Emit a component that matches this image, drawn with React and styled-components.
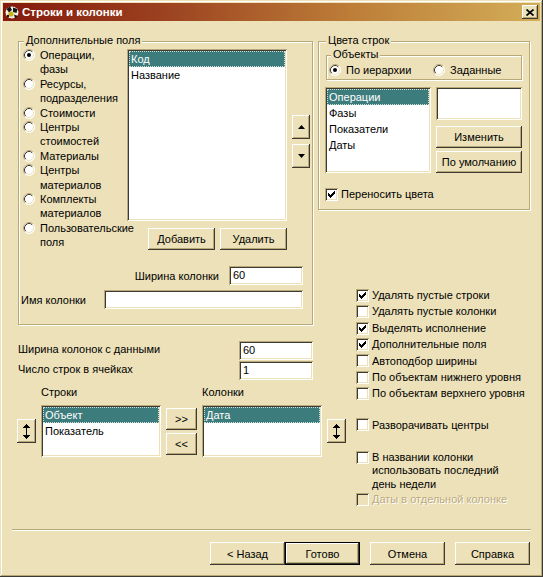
import React from "react";
import styled, { createGlobalStyle, css } from "styled-components";

const FACE = "#ece1b9";
const SHADOW = "#b9a979";
const DARK = "#3c3a32";
const SELECT = "#3d7c7c";
const DISABLED = "#bcab7d";

const GlobalStyle = createGlobalStyle`
  html, body { margin: 0; padding: 0; background: ${FACE}; }
  body { font-family: "Liberation Sans", Arial, sans-serif; font-size: 11px; color: #000; }
  *, *::before, *::after { box-sizing: border-box; }
`;

const raised = css`
  background: ${FACE};
  box-shadow: inset -1px -1px ${DARK}, inset 1px 1px #fff, inset -2px -2px ${SHADOW};
`;

const sunken = css`
  box-shadow: inset 1px 1px ${SHADOW}, inset -1px -1px #fff, inset 2px 2px ${DARK},
    inset -2px -2px ${FACE};
`;

const etched = css`
  border: 1px solid ${SHADOW};
  box-shadow: inset 1px 1px 0 #fff, 1px 1px 0 #fff;
`;

/* ---------- window frame ---------- */

const Window = styled.div`
  width: 543px;
  height: 577px;
  display: flex;
  flex-direction: column;
  padding: 3px;
  background: ${FACE};
  box-shadow: inset -1px -1px ${DARK}, inset 1px 1px ${FACE}, inset -2px -2px ${SHADOW},
    inset 2px 2px #fff;
  font-family: "Liberation Sans", Arial, sans-serif;
  font-size: 11px;
`;

const TitleBar = styled.div`
  height: 18px;
  flex: none;
  display: flex;
  align-items: center;
  gap: 2px;
  padding: 0 2px 0 1px;
  background: linear-gradient(90deg, #84190c 0%, #9c4220 30%, #bd7e38 65%, #d3ad58 100%);
  color: #fff;
  font-weight: bold;
  font-size: 11.5px;
  white-space: nowrap;
`;

const TitleText = styled.span`
  line-height: 18px;
`;

const CloseButton = styled.div`
  margin-left: auto;
  width: 16px;
  height: 14px;
  display: flex;
  align-items: center;
  justify-content: center;
  ${raised};
`;

const Body = styled.div`
  flex: 1;
  display: flex;
  flex-direction: column;
  padding: 20px 10px 9px 15px;
`;

const MainGrid = styled.div`
  display: grid;
  grid-template-columns: 300px 38px 174px;
  grid-template-rows: 248px 36px auto;
  grid-template-areas:
    "extra colors colors"
    "extra . checks"
    "bottom bottom checks";
`;

/* ---------- group boxes ---------- */

const GroupBox = styled.div`
  position: relative;
  ${etched};
  grid-area: ${(p) => p.$area || "auto"};
`;

const Legend = styled.span`
  position: absolute;
  top: -8px;
  left: ${(p) => p.$left}px;
  padding: 0 2px;
  line-height: 13px;
  background: ${FACE};
  white-space: nowrap;
`;

const ExtraGroup = styled(GroupBox)`
  margin-right: 5px;
  padding: 6px 2px 0 4px;
`;

const ExtraLayout = styled.div`
  display: grid;
  grid-template-columns: 104px 160px 5px 18px;
  grid-template-rows: 173px 22px;
  row-gap: 7px;
`;

const RadioColumn = styled.div`
  grid-column: 1;
  grid-row: 1 / span 2;
  display: flex;
  flex-direction: column;
`;

const RadioRow = styled.div`
  display: flex;
  align-items: flex-start;
  gap: 5px;
  line-height: 14.4px;
  white-space: nowrap;
`;

const RadioSvg = styled.svg`
  flex: none;
  margin-top: 1px;
`;

const ListCell = styled.div`
  grid-column: ${(p) => p.$col || "auto"};
  grid-row: ${(p) => p.$row || "auto"};
  margin-top: ${(p) => p.$mt || 0}px;
`;

const ArrowStack = styled.div`
  grid-column: 4;
  grid-row: 1;
  margin-top: 67px;
  display: flex;
  flex-direction: column;
  gap: 5px;
`;

const ButtonPair = styled.div`
  grid-column: 2;
  grid-row: 2;
  display: flex;
  justify-content: flex-end;
  gap: 5px;
`;

const WidthRow = styled.div`
  margin-top: 16px;
  padding-right: 7px;
  display: flex;
  justify-content: flex-end;
  align-items: center;
  gap: 10px;
`;

const NameRow = styled.div`
  margin: 5px 0 0 -2px;
  padding-right: 7px;
  display: grid;
  grid-template-columns: 83px 1fr;
  align-items: center;
`;

const ColorsGroup = styled(GroupBox)`
  align-self: start;
  padding: 13px 7px 8px 6px;
`;

const ObjectsBox = styled(GroupBox)`
  margin-left: 1px;
  height: 25px;
  padding: 7px 0 0 2px;
  display: grid;
  grid-template-columns: 104px auto;
`;

const ColorsRow = styled.div`
  margin-top: 7px;
  display: flex;
  gap: 5px;
`;

const ColorSide = styled.div`
  width: 86px;
  display: flex;
  flex-direction: column;
`;

const Swatch = styled.div`
  height: 33px;
  margin-bottom: 6px;
  background: #fff;
  ${sunken};
`;

/* ---------- controls ---------- */

const Button = styled.div`
  width: ${(p) => p.$w}px;
  height: ${(p) => p.$h || 22}px;
  margin-top: ${(p) => p.$mt || 0}px;
  display: flex;
  align-items: center;
  justify-content: center;
  flex: none;
  white-space: nowrap;
  ${raised};
  ${(p) =>
    p.$default &&
    css`
      border: 1px solid #000;
    `}
`;

const ListBox = styled.div`
  width: ${(p) => p.$w}px;
  height: ${(p) => p.$h}px;
  padding: 2px;
  background: #fff;
  overflow: hidden;
  ${sunken};
`;

const ListItem = styled.div`
  height: 16px;
  line-height: 16px;
  padding-left: 2px;
  white-space: nowrap;
  ${(p) =>
    p.$selected &&
    css`
      background: ${SELECT};
      color: #fff;
      outline: 1px dotted #cfe0d8;
      outline-offset: -1px;
    `}
`;

const TextField = styled.div`
  width: ${(p) => (p.$w ? `${p.$w}px` : "auto")};
  height: 19px;
  padding: 0 4px;
  line-height: 19px;
  background: #fff;
  ${sunken};
`;

const Label = styled.span`
  white-space: nowrap;
  line-height: 14px;
`;

const CheckRow = styled.div`
  display: flex;
  align-items: flex-start;
  gap: 3px;
  margin-top: ${(p) => p.$mt || 0}px;
  line-height: ${(p) => p.$lh}px;
  white-space: nowrap;
  color: ${(p) => (p.$disabled ? DISABLED : "#000")};
  text-shadow: ${(p) => (p.$disabled ? "1px 1px 0 #fff" : "none")};
`;

const CheckFrame = styled.span`
  flex: none;
  width: 13px;
  height: 13px;
  margin-top: ${(p) => p.$mt}px;
  display: flex;
  align-items: center;
  justify-content: center;
  background: ${(p) => (p.$disabled ? FACE : "#fff")};
  ${sunken};
`;

const CheckList = styled.div`
  grid-area: checks;
  margin-top: -2px;
  display: flex;
  flex-direction: column;
`;

const BottomArea = styled.div`
  grid-area: bottom;
  padding-top: 16px;
  display: flex;
  flex-direction: column;
`;

const FieldGrid = styled.div`
  display: grid;
  grid-template-columns: 221px 74px;
  row-gap: 1px;
  align-items: start;
`;

const FieldLabel = styled(Label)`
  padding-top: 1px;
`;

const TransferGrid = styled.div`
  margin: 5px 0 0 -1px;
  display: grid;
  grid-template-columns: 19px 120px 31px 120px 19px;
  grid-template-rows: 14px 52px;
  column-gap: 5px;
  row-gap: 6px;
`;

const GridLabel = styled(Label)`
  grid-column: ${(p) => p.$col};
  grid-row: 1;
`;

const CenterCell = styled.div`
  grid-column: ${(p) => p.$col};
  grid-row: 2;
  align-self: center;
  display: flex;
  flex-direction: column;
  gap: 3px;
`;

const Footer = styled.div`
  margin-top: auto;
  display: flex;
  flex-direction: column;
`;

const Separator = styled.div`
  height: 2px;
  margin: 0 -1px 11px -6px;
  border-top: 1px solid ${SHADOW};
  border-bottom: 1px solid #fff;
`;

const FooterButtons = styled.div`
  display: flex;
  justify-content: flex-end;
  gap: 10px;
`;

const Joined = styled.div`
  display: flex;
`;

/* ---------- drawings ---------- */

const AppIcon = () => (
  <svg width="16" height="16" viewBox="0 0 16 16">
    <ellipse cx="8" cy="8.5" rx="6.5" ry="6" fill="#f4f1e2" />
    <path d="M2.5 5 L6 2.5 L8 6 L5 8.5 Z" fill="#161616" />
    <path d="M9 3.5 L13.5 5 L12.5 9 L9 8 Z" fill="#161616" />
    <circle cx="7" cy="10" r="2.6" fill="#c9b21e" />
    <path d="M10 10.5 L14 12 L11 14.5 Z" fill="#161616" />
    <circle cx="4" cy="12" r="1.2" fill="#161616" />
  </svg>
);

const CloseGlyph = () => (
  <svg width="8" height="7" viewBox="0 0 8 7">
    <path d="M0.5 0.5 L7.5 6.5 M7.5 0.5 L0.5 6.5" stroke="#000" strokeWidth="1.7" />
  </svg>
);

const RadioMark = ({ checked }) => (
  <RadioSvg width="12" height="12" viewBox="0 0 12 12">
    <circle cx="6" cy="6" r="5.5" fill="#fff" />
    <path d="M2.11 9.89 A5.5 5.5 0 0 1 9.89 2.11" stroke={SHADOW} fill="none" />
    <path d="M9.89 2.11 A5.5 5.5 0 0 1 2.11 9.89" stroke="#fff" fill="none" />
    <path d="M2.82 9.18 A4.5 4.5 0 0 1 9.18 2.82" stroke={DARK} fill="none" />
    <path d="M9.18 2.82 A4.5 4.5 0 0 1 2.82 9.18" stroke={FACE} fill="none" />
    {checked && <circle cx="6" cy="6" r="2" fill="#000" />}
  </RadioSvg>
);

const CheckMark = () => (
  <svg width="7" height="7" viewBox="0 0 7 7" shapeRendering="crispEdges">
    {[2, 3, 4, 3, 2, 1, 0].map((y, x) => (
      <rect key={x} x={x} y={y} width="1" height="3" fill="#000" />
    ))}
  </svg>
);

const Triangle = ({ down }) => (
  <svg width="7" height="4" viewBox="0 0 7 4">
    <polygon points={down ? "0,0 7,0 3.5,4" : "3.5,0 7,4 0,4"} fill="#000" />
  </svg>
);

const UpDownGlyph = () => (
  <svg width="7" height="15" viewBox="0 0 7 15" shapeRendering="crispEdges">
    <polygon points="3.5,0 7,4 0,4" fill="#000" />
    <rect x="3" y="4" width="1" height="7" fill="#000" />
    <polygon points="0,11 7,11 3.5,15" fill="#000" />
  </svg>
);

/* ---------- small composites ---------- */

const Radio = ({ checked, lines }) => (
  <RadioRow>
    <RadioMark checked={checked} />
    <span>
      {lines.map((l, i) => (
        <div key={i}>{l}</div>
      ))}
    </span>
  </RadioRow>
);

const Check = ({ checked, disabled, lines, lh = 16.4, mt }) => (
  <CheckRow $lh={lh} $mt={mt} $disabled={disabled}>
    <CheckFrame $mt={(lh - 13) / 2} $disabled={disabled}>
      {checked && <CheckMark />}
    </CheckFrame>
    <span>
      {lines.map((l, i) => (
        <div key={i}>{l}</div>
      ))}
    </span>
  </CheckRow>
);

const List = ({ w, h, items, selected = 0 }) => (
  <ListBox $w={w} $h={h}>
    {items.map((it, i) => (
      <ListItem key={it} $selected={i === selected}>
        {it}
      </ListItem>
    ))}
  </ListBox>
);

const extraFields = [
  ["Операции,", "фазы"],
  ["Ресурсы,", "подразделения"],
  ["Стоимости"],
  ["Центры", "стоимостей"],
  ["Материалы"],
  ["Центры", "материалов"],
  ["Комплекты", "материалов"],
  ["Пользовательские", "поля"],
];

const options = [
  ["Удалять пустые строки", true],
  ["Удалять пустые колонки", false],
  ["Выделять исполнение", true],
  ["Дополнительные поля", true],
  ["Автоподбор ширины", false],
  ["По объектам нижнего уровня", false],
  ["По объектам верхнего уровня", false],
];

export default function App() {
  return (
    <>
      <GlobalStyle />
      <Window>
        <TitleBar>
          <AppIcon />
          <TitleText>Строки и колонки</TitleText>
          <CloseButton>
            <CloseGlyph />
          </CloseButton>
        </TitleBar>

        <Body>
          <MainGrid>
            <ExtraGroup $area="extra">
              <Legend $left={5}>Дополнительные поля</Legend>
              <ExtraLayout>
                <RadioColumn>
                  {extraFields.map((lines, i) => (
                    <Radio key={i} lines={lines} checked={i === 0} />
                  ))}
                </RadioColumn>
                <ListCell $col={2} $row={1} $mt={1}>
                  <List w={160} h={172} items={["Код", "Название"]} />
                </ListCell>
                <ArrowStack>
                  <Button $w={18} $h={24}>
                    <Triangle />
                  </Button>
                  <Button $w={18} $h={24}>
                    <Triangle down />
                  </Button>
                </ArrowStack>
                <ButtonPair>
                  <Button $w={67}>Добавить</Button>
                  <Button $w={67}>Удалить</Button>
                </ButtonPair>
              </ExtraLayout>
              <WidthRow>
                <Label>Ширина колонки</Label>
                <TextField $w={74}>60</TextField>
              </WidthRow>
              <NameRow>
                <Label>Имя колонки</Label>
                <TextField />
              </NameRow>
            </ExtraGroup>

            <ColorsGroup $area="colors">
              <Legend $left={7}>Цвета строк</Legend>
              <ObjectsBox>
                <Legend $left={4}>Объекты</Legend>
                <Radio checked lines={["По иерархии"]} />
                <Radio lines={["Заданные"]} />
              </ObjectsBox>
              <ColorsRow>
                <List w={106} h={86} items={["Операции", "Фазы", "Показатели", "Даты"]} />
                <ColorSide>
                  <Swatch />
                  <Button $w={86}>Изменить</Button>
                  <Button $w={86} $mt={3}>
                    По умолчанию
                  </Button>
                </ColorSide>
              </ColorsRow>
              <Check checked lh={14} mt={14} lines={["Переносить цвета"]} />
            </ColorsGroup>

            <CheckList>
              {options.map(([text, on]) => (
                <Check key={text} checked={on} lines={[text]} />
              ))}
              <Check mt={15} lh={16} lines={["Разворачивать центры"]} />
              <Check
                mt={18}
                lh={13.5}
                lines={["В названии колонки", "использовать последний", "день недели"]}
              />
              <Check disabled lh={16} lines={["Даты в отдельной колонке"]} />
            </CheckList>

            <BottomArea>
              <FieldGrid>
                <FieldLabel>Ширина колонок с данными</FieldLabel>
                <TextField>60</TextField>
                <FieldLabel>Число строк в ячейках</FieldLabel>
                <TextField>1</TextField>
              </FieldGrid>
              <TransferGrid>
                <GridLabel $col={2}>Строки</GridLabel>
                <GridLabel $col={4}>Колонки</GridLabel>
                <CenterCell $col={1}>
                  <Button $w={19} $h={24}>
                    <UpDownGlyph />
                  </Button>
                </CenterCell>
                <ListCell $col={2} $row={2}>
                  <List w={120} h={52} items={["Объект", "Показатель"]} />
                </ListCell>
                <CenterCell $col={3}>
                  <Button $w={31}>&gt;&gt;</Button>
                  <Button $w={31}>&lt;&lt;</Button>
                </CenterCell>
                <ListCell $col={4} $row={2}>
                  <List w={120} h={52} items={["Дата"]} />
                </ListCell>
                <CenterCell $col={5}>
                  <Button $w={19} $h={24}>
                    <UpDownGlyph />
                  </Button>
                </CenterCell>
              </TransferGrid>
            </BottomArea>
          </MainGrid>

          <Footer>
            <Separator />
            <FooterButtons>
              <Joined>
                <Button $w={75} $h={23}>
                  &lt; Назад
                </Button>
                <Button $w={75} $h={23} $default>
                  Готово
                </Button>
              </Joined>
              <Button $w={75} $h={23}>
                Отмена
              </Button>
              <Button $w={75} $h={23}>
                Справка
              </Button>
            </FooterButtons>
          </Footer>
        </Body>
      </Window>
    </>
  );
}
